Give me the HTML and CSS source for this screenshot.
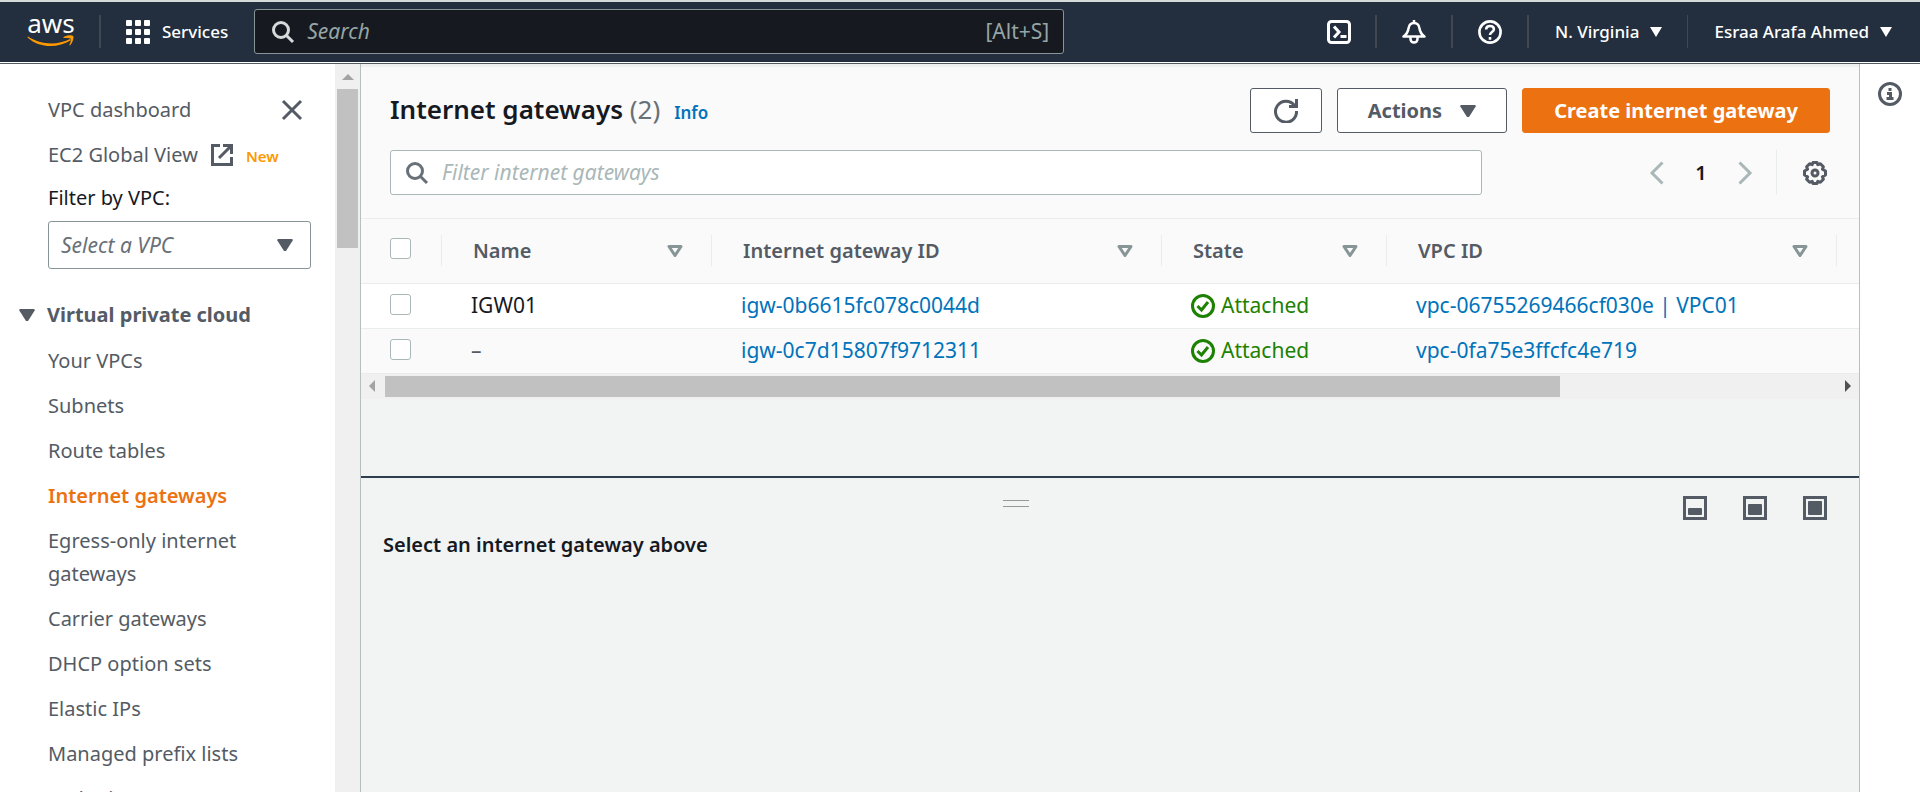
FILE: index.html
```html
<!DOCTYPE html>
<html lang="en">
<head>
<meta charset="utf-8">
<title>Internet gateways | VPC Management Console</title>
<link rel="stylesheet" href="styles.css">
</head>
<body>
<header class="topnav">
  <a class="logo" href="#" aria-label="AWS home">
    <span class="logo-word">aws</span>
    <svg class="logo-smile" viewBox="0 0 48 12" aria-hidden="true"><path d="M1 1.500C14 10 30 10.500 43 4l.8 1.300C31 13.500 12 13.500.3 2.300z" fill="#f90"/><path d="M36.500 2.300c3-2.200 8.500-2.400 9.600-1.300 1.100 1.100-.3 6.500-3 9.200-.5.400-1 .2-.7-.4.800-1.700 1.900-5.200 1.300-6.100-.7-.9-4.500-.9-6.600-.6-.7.100-1-.4-.6-.8z" fill="#f90"/></svg>
  </a>
  <span class="nav-divider"></span>
  <button class="nav-button services" type="button">
    <svg class="icon" viewBox="0 0 24 24" aria-hidden="true" fill="#fff"><rect width="6" height="6" rx="1"/><rect x="9" width="6" height="6" rx="1"/><rect x="18" width="6" height="6" rx="1"/><rect y="9" width="6" height="6" rx="1"/><rect x="9" y="9" width="6" height="6" rx="1"/><rect x="18" y="9" width="6" height="6" rx="1"/><rect y="18" width="6" height="6" rx="1"/><rect x="9" y="18" width="6" height="6" rx="1"/><rect x="18" y="18" width="6" height="6" rx="1"/></svg>
    Services
  </button>
  <label class="global-search">
    <svg class="icon" viewBox="0 0 24 24" aria-hidden="true" fill="none" stroke="#d5dbdb" stroke-width="3"><circle cx="10" cy="10" r="7.500"/><path d="M15.500 15.500l6.500 6.500"/></svg>
    <input type="search" placeholder="Search" aria-label="Search">
    <span class="shortcut">[Alt+S]</span>
  </label>
  <nav class="nav-tools">
    <button class="nav-button tool" type="button" aria-label="CloudShell"><svg class="icon" viewBox="0 0 24 24" fill="none" stroke="#fff" stroke-width="3"><rect x="1.500" y="1.500" width="21" height="21" rx="3"/><path d="M7 6.500l5 5.500-5 5.500M13.500 16.500h6"/></svg></button>
    <span class="nav-divider"></span>
    <button class="nav-button tool" type="button" aria-label="Notifications"><svg class="icon" viewBox="0 0 24 24" fill="none" stroke="#fff" stroke-width="2.500" stroke-linejoin="round"><path d="M12 0v3M1.500 16.500h21c-3-2-4.500-4.500-5-8C17 4.500 14.500 3 12 3S7 4.500 6.500 8.500c-.5 3.500-2 6-5 8zM8.500 17v2c0 2 1.500 3.500 3.500 3.500s3.500-1.500 3.500-3.500v-2"/></svg></button>
    <span class="nav-divider"></span>
    <button class="nav-button tool" type="button" aria-label="Help"><svg class="icon" viewBox="0 0 24 24" fill="none" stroke="#fff" stroke-width="2.600"><circle cx="12" cy="12" r="10.600"/><path d="M8.200 9.500V8.800C8.400 7 9.800 6 12 6c2.300 0 3.900 1.200 3.900 3.200 0 2.800-3.900 2.800-3.900 5.800M12 17v2.800"/></svg></button>
    <span class="nav-divider"></span>
    <button class="nav-button menu" type="button">N. Virginia <svg class="caret-small" viewBox="0 0 12 10" aria-hidden="true"><path d="M0 0h12L6 10z" fill="#fff"/></svg></button>
    <span class="nav-divider thin"></span>
    <button class="nav-button menu" type="button">Esraa Arafa Ahmed <svg class="caret-small" viewBox="0 0 12 10" aria-hidden="true"><path d="M0 0h12L6 10z" fill="#fff"/></svg></button>
  </nav>
</header>

<div class="layout">
  <aside class="sidebar">
    <div class="side-content">
      <div class="side-head">
        <a href="#">VPC dashboard</a>
        <button class="plain" type="button" aria-label="Close navigation"><svg class="icon" viewBox="0 0 24 24" fill="none" stroke="#545b64" stroke-width="3"><path d="M3 3l18 18M21 3L3 21"/></svg></button>
      </div>
      <div class="side-row">
        <a href="#">EC2 Global View</a>
        <svg class="icon" viewBox="0 0 24 24" aria-hidden="true" fill="none" stroke="#545b64" stroke-width="3"><path d="M10 2.500H2.500v19h19V14M13 2.500h8.500V11M21 3L9 15"/></svg>
        <span class="badge-new">New</span>
      </div>
      <label class="filter-label" for="vpc-filter">Filter by VPC:</label>
      <div class="select-wrap">
        <select id="vpc-filter"><option>Select a VPC</option></select>
        <svg class="caret" viewBox="0 0 16 12" aria-hidden="true"><path d="M1 0h14l1 1-7 11H7L0 1z" fill="#545b64"/></svg>
      </div>
      <button class="section-toggle" type="button" aria-expanded="true"><svg class="caret" viewBox="0 0 16 12" aria-hidden="true"><path d="M1 0h14l1 1-7 11H7L0 1z" fill="#545b64"/></svg>Virtual private cloud</button>
      <ul class="side-links">
        <li><a href="#">Your VPCs</a></li>
        <li><a href="#">Subnets</a></li>
        <li><a href="#">Route tables</a></li>
        <li><a href="#" class="active" aria-current="page">Internet gateways</a></li>
        <li><a href="#">Egress-only internet gateways</a></li>
        <li><a href="#">Carrier gateways</a></li>
        <li><a href="#">DHCP option sets</a></li>
        <li><a href="#">Elastic IPs</a></li>
        <li><a href="#">Managed prefix lists</a></li>
        <li><a href="#">Endpoints</a></li>
      </ul>
    </div>
    <div class="vscroll" aria-hidden="true">
      <svg class="arrow-up" viewBox="0 0 12 6"><path d="M0 6L6 0l6 6z" fill="#a3a3a3"/></svg>
      <span class="vthumb"></span>
    </div>
  </aside>

  <main class="main">
    <section class="list-pane">
      <div class="panel-head">
        <div class="title-row">
          <div class="title">
            <h1>Internet gateways <span class="count">(2)</span></h1>
            <a class="info" href="#">Info</a>
          </div>
          <div class="actions">
            <button class="btn" type="button" aria-label="Refresh"><svg class="icon" viewBox="0 0 24 24" fill="none" stroke="#545b64" stroke-width="3"><path d="M20.500 6.500A10.500 10.500 0 1 0 22.500 12M22.500 0v7.500H15"/></svg></button>
            <button class="btn" type="button">Actions <svg class="caret" viewBox="0 0 16 12" aria-hidden="true"><path d="M1 0h14l1 1-7 11H7L0 1z" fill="#545b64"/></svg></button>
            <button class="btn primary" type="button">Create internet gateway</button>
          </div>
        </div>
        <div class="filter-row">
          <label class="filter-box">
            <svg class="icon" viewBox="0 0 24 24" aria-hidden="true" fill="none" stroke="#687078" stroke-width="3"><circle cx="10" cy="10" r="7.500"/><path d="M15.500 15.500l6.500 6.500"/></svg>
            <input type="search" placeholder="Filter internet gateways" aria-label="Filter internet gateways">
          </label>
          <div class="pager">
            <button class="plain" type="button" aria-label="Previous page"><svg class="icon" viewBox="0 0 24 24" fill="none" stroke="#aab7b8" stroke-width="3"><path d="M17.500 1.500L7 12l10.500 10.500"/></svg></button>
            <span class="page">1</span>
            <button class="plain" type="button" aria-label="Next page"><svg class="icon" viewBox="0 0 24 24" fill="none" stroke="#aab7b8" stroke-width="3"><path d="M6.500 1.500L17 12 6.500 22.500"/></svg></button>
            <span class="pager-divider"></span>
            <button class="plain" type="button" aria-label="Preferences"><svg class="icon" viewBox="0 0 24 24" fill="none" stroke="#545b64" stroke-width="3" stroke-linejoin="round"><path d="M10 1.500h4l.8 2.200 2.600-1 3 3-1 2.600 3.100 1.700v4l-3.100 1.700 1 2.600-3 3-2.600-1-.8 2.200h-4l-.8-2.200-2.600 1-3-3 1-2.600L1.500 14v-4l3.100-1.700-1-2.600 3-3 2.600 1z"/><circle cx="12" cy="12" r="3"/></svg></button>
          </div>
        </div>
      </div>
      <table class="grid">
        <colgroup><col class="c-check"><col class="c-name"><col class="c-wide"><col class="c-state"><col class="c-wide"><col></colgroup>
        <thead>
          <tr>
            <th><div class="th"><input type="checkbox" aria-label="Select all"></div></th>
            <th><div class="th">Name<button class="plain" type="button" aria-label="Sort by name"><svg class="caret" viewBox="0 0 16 12" fill="none" stroke="#879596" stroke-width="3" stroke-linejoin="round"><path d="M2 1.500h12L8 10.500z"/></svg></button></div></th>
            <th><div class="th">Internet gateway ID<button class="plain" type="button" aria-label="Sort by ID"><svg class="caret" viewBox="0 0 16 12" fill="none" stroke="#879596" stroke-width="3" stroke-linejoin="round"><path d="M2 1.500h12L8 10.500z"/></svg></button></div></th>
            <th><div class="th">State<button class="plain" type="button" aria-label="Sort by state"><svg class="caret" viewBox="0 0 16 12" fill="none" stroke="#879596" stroke-width="3" stroke-linejoin="round"><path d="M2 1.500h12L8 10.500z"/></svg></button></div></th>
            <th><div class="th">VPC ID<button class="plain" type="button" aria-label="Sort by VPC"><svg class="caret" viewBox="0 0 16 12" fill="none" stroke="#879596" stroke-width="3" stroke-linejoin="round"><path d="M2 1.500h12L8 10.500z"/></svg></button></div></th>
            <th></th>
          </tr>
        </thead>
        <tbody>
          <tr>
            <td><input type="checkbox" aria-label="Select IGW01"></td>
            <td>IGW01</td>
            <td><a href="#">igw-0b6615fc078c0044d</a></td>
            <td><span class="status"><svg class="icon" viewBox="0 0 24 24" aria-hidden="true" fill="none" stroke="#1d8102" stroke-width="3"><circle cx="12" cy="12" r="10.500"/><path d="M6.500 12l4 4 6.500-8"/></svg>Attached</span></td>
            <td><a href="#">vpc-06755269466cf030e | VPC01</a></td>
            <td></td>
          </tr>
          <tr>
            <td><input type="checkbox" aria-label="Select igw-0c7d15807f9712311"></td>
            <td class="muted">–</td>
            <td><a href="#">igw-0c7d15807f9712311</a></td>
            <td><span class="status"><svg class="icon" viewBox="0 0 24 24" aria-hidden="true" fill="none" stroke="#1d8102" stroke-width="3"><circle cx="12" cy="12" r="10.500"/><path d="M6.500 12l4 4 6.500-8"/></svg>Attached</span></td>
            <td><a href="#">vpc-0fa75e3ffcfc4e719</a></td>
            <td></td>
          </tr>
        </tbody>
      </table>
      <div class="hscroll" aria-hidden="true">
        <svg class="arrow-side" viewBox="0 0 6 12"><path d="M6 0v12L0 6z" fill="#a3a3a3"/></svg>
        <span class="htrack"><span class="hthumb"></span></span>
        <svg class="arrow-side" viewBox="0 0 6 12"><path d="M0 0v12l6-6z" fill="#505050"/></svg>
      </div>
    </section>
    <section class="detail-pane">
      <div class="detail-bar">
        <span></span>
        <span class="handle"></span>
        <span></span>
        <div class="layout-buttons">
          <button class="plain" type="button" aria-label="Small panel"><svg class="icon" viewBox="0 0 24 24"><rect x="1.500" y="1.500" width="21" height="21" fill="none" stroke="#545b64" stroke-width="3"/><rect x="5" y="12" width="14" height="7" rx="1" fill="#545b64"/></svg></button>
          <button class="plain" type="button" aria-label="Medium panel"><svg class="icon" viewBox="0 0 24 24"><rect x="1.500" y="1.500" width="21" height="21" fill="none" stroke="#545b64" stroke-width="3"/><rect x="5" y="8" width="14" height="11" rx="1" fill="#545b64"/></svg></button>
          <button class="plain" type="button" aria-label="Full panel"><svg class="icon" viewBox="0 0 24 24"><rect x="1.500" y="1.500" width="21" height="21" fill="none" stroke="#545b64" stroke-width="3"/><rect x="5" y="5" width="14" height="14" rx="1" fill="#545b64"/></svg></button>
        </div>
      </div>
      <h2>Select an internet gateway above</h2>
    </section>
  </main>

  <aside class="help-rail">
    <button class="plain" type="button" aria-label="Open help panel"><svg class="icon" viewBox="0 0 24 24" fill="none" stroke="#545b64" stroke-width="3"><circle cx="12" cy="12" r="10.500"/><path d="M10.500 7.500h3M9 11.500h3.500V17M8.500 16.500h7"/></svg></button>
  </aside>
</div>
</body>
</html>
```
FILE: styles.css
```css
* { box-sizing: border-box; }

body {
  margin: 0;
  height: 100vh;
  display: flex;
  flex-direction: column;
  overflow: hidden;
  background: #fff;
  color: #16191f;
  font-family: "Noto Sans", sans-serif;
  font-size: 20px;
  line-height: 33px;
}

a { color: #0073bb; text-decoration: none; }
button, input, select { font: inherit; color: inherit; margin: 0; }
button { cursor: pointer; }
.icon { width: 24px; height: 24px; flex: none; display: block; }
.caret { width: 16px; height: 12px; flex: none; display: block; }
.plain { display: flex; padding: 0; border: 0; background: none; }

/* Top navigation */
.topnav {
  flex: none;
  display: flex;
  align-items: center;
  height: 64px;
  padding: 0 28px 2px 27px;
  border-top: 2px solid #d5dbdb;
  border-bottom: 1px solid #545b64;
  box-shadow: inset 0 -1px #fff;
  background: #232f3e;
  color: #fff;
  font-size: 17px;
}
.logo { width: 48px; margin-right: 24px; padding-bottom: 2px; color: #fff; }
.logo-word { display: block; margin-bottom: 4px; font-size: 26px; line-height: 16px; text-align: center; }
.logo-smile { display: block; width: 48px; height: 12px; }
.nav-divider { flex: none; width: 2px; height: 33px; background: #414750; }
.nav-divider.thin { width: 1px; }
.nav-button { display: flex; align-items: center; padding: 0; border: 0; background: none; font-weight: 500; white-space: nowrap; }
.services { gap: 12px; margin: 0 26px 0 25px; }
.global-search {
  flex: 0 1 810px;
  display: flex;
  align-items: center;
  gap: 12px;
  height: 45px;
  padding: 0 14px 0 16px;
  border: 1px solid #879596;
  border-radius: 3px;
  background: #16191f;
  font-size: 21px;
}
.global-search input { flex: 1; min-width: 0; border: 0; padding: 0; outline: 0; background: none; }
.global-search input::placeholder { color: #95a5a6; font-style: italic; opacity: 1; }
.shortcut { color: #95a5a6; }
.nav-tools { display: flex; align-items: center; margin-left: auto; }
.tool { margin: 0 25px; }
.tool:first-child { margin-right: 24px; }
.menu { gap: 11px; margin-left: 26px; }
.menu + .thin { margin-left: 25px; }
.caret-small { width: 12px; height: 10px; }

/* Page columns */
.layout { flex: 1; min-height: 0; display: flex; }

.sidebar { flex: none; display: flex; width: 361px; border-right: 1px solid #b8bfc0; overflow: hidden; }
.side-content { flex: 1; padding: 29px 24px 0 48px; color: #545b64; }
.side-content a { color: #545b64; }
.side-head { display: flex; justify-content: space-between; align-items: center; padding-right: 7px; margin-bottom: 12px; }
.side-row { display: flex; align-items: center; gap: 12px; }
.badge-new { margin-top: 3px; color: #ff9900; font-size: 15px; line-height: 24px; font-weight: 600; }
.filter-label { display: block; margin: 10px 0 7px; color: #16191f; }
.select-wrap { display: grid; align-items: center; }
.select-wrap > * { grid-area: 1 / 1; }
.select-wrap select {
  appearance: none;
  width: 100%;
  height: 48px;
  padding: 0 12px;
  border: 1px solid #879596;
  border-radius: 3px;
  background: #fff;
  color: #687078;
  font-size: 21px;
  font-style: italic;
}
.select-wrap .caret { justify-self: end; margin-right: 18px; pointer-events: none; }
.section-toggle {
  display: flex;
  align-items: center;
  gap: 12px;
  margin: 29px 0 0 -29px;
  padding: 0;
  border: 0;
  background: none;
  font-weight: 700;
  white-space: nowrap;
}
.side-links { list-style: none; margin: 13px 0 0; padding: 0; }
.side-links li { margin-bottom: 12px; }
.side-content .active { color: #ec7211; font-weight: 600; }

.vscroll { flex: none; display: flex; flex-direction: column; align-items: center; gap: 9px; width: 25px; padding-top: 10px; background: #f0f0f0; }
.arrow-up { width: 12px; height: 6px; }
.vthumb { width: 21px; height: 159px; background: #c1c1c1; }

.main { flex: 1; min-width: 0; display: flex; flex-direction: column; background: #f2f3f3; }
.list-pane { flex: 412 0 0; min-height: 0; border-top: 3px solid #eff1f1; }
.panel-head { padding: 21px 29px 23px; border-bottom: 1px solid #eaeded; background: #fafafa; }
.title-row { display: flex; align-items: center; justify-content: space-between; }
.title { display: flex; align-items: baseline; gap: 14px; }
h1 { margin: 0; font-size: 26px; font-weight: 600; }
.count { color: #687078; font-weight: 400; }
.info { font-size: 17px; font-weight: 600; }
.actions { display: flex; gap: 15px; }
.btn {
  display: flex;
  align-items: center;
  gap: 18px;
  height: 45px;
  padding: 0 30px;
  border: 1px solid #545b64;
  border-radius: 3px;
  background: #fff;
  color: #545b64;
  font-weight: 700;
}
.btn:first-child { padding: 0 23px; }
.btn.primary { padding: 0 31px; border-color: #ec7211; background: #ec7211; color: #fff; }
.filter-row { display: flex; align-items: center; justify-content: space-between; margin-top: 17px; }
.filter-box {
  flex: 0 1 1092px;
  display: flex;
  align-items: center;
  gap: 13px;
  height: 45px;
  padding: 0 14px;
  border: 1px solid #aab7b8;
  border-radius: 3px;
  background: #fff;
  font-size: 21px;
}
.filter-box input { flex: 1; min-width: 0; border: 0; padding: 0; outline: 0; background: none; }
.filter-box input::placeholder { color: #aab7b8; font-style: italic; opacity: 1; }
.pager { display: flex; align-items: center; padding-right: 3px; }
.page { width: 64px; text-align: center; font-weight: 600; }
.pager-divider { width: 1px; height: 45px; margin: 0 26px 0 19px; background: #eaeded; }

/* Gateway table */
.grid { width: 100%; table-layout: fixed; border-collapse: collapse; }
.c-check { width: 81px; }
.c-name { width: 270px; }
.c-wide { width: 450px; }
.c-state { width: 225px; }
.grid tr { border-bottom: 1px solid #eaeded; background: #fff; }
.grid thead tr, .grid tbody tr:nth-child(2) { background: #fafafa; }
.grid th { height: 64px; padding: 0; text-align: left; color: #545b64; font-weight: 600; }
.th { display: flex; align-items: center; justify-content: space-between; height: 31px; padding: 0 28px 0 31px; border-right: 1px solid #eaeded; }
.grid td { height: 45px; padding: 0 0 0 29px; font-size: 21px; white-space: nowrap; }
.grid td:first-child { padding-bottom: 2px; }
.grid .muted { color: #545b64; }
.grid th:first-child .th { align-items: flex-start; padding: 3px 0 0 29px; }
.grid input {
  appearance: none;
  display: block;
  width: 21px;
  height: 21px;
  border: 1px solid #aab7b8;
  border-radius: 3px;
  background: #fff;
}
.status { display: flex; align-items: center; gap: 6px; color: #1d8102; }

.hscroll { display: flex; align-items: center; gap: 10px; height: 25px; padding: 0 8px; background: #f0f0f0; }
.arrow-side { flex: none; width: 6px; height: 12px; }
.htrack { flex: 1; }
.hthumb { display: block; width: 81%; height: 21px; background: #c1c1c1; }

/* Split panel */
.detail-pane { flex: 316 0 0; min-height: 0; border-top: 2px solid #2f3e4c; }
.detail-bar { display: grid; grid-template-columns: 1fr 26px 1fr auto; column-gap: 36px; align-items: start; padding: 18px 32px 0 24px; }
.handle { height: 7px; margin-top: 4px; border: solid #95999b; border-width: 1px 0; }
.layout-buttons { display: flex; gap: 36px; }
h2 { margin: 8px 22px; font-size: 20px; font-weight: 600; }

.help-rail { flex: none; width: 61px; padding: 18px; border-left: 1px solid #b8bfc0; background: #fff; }
```
